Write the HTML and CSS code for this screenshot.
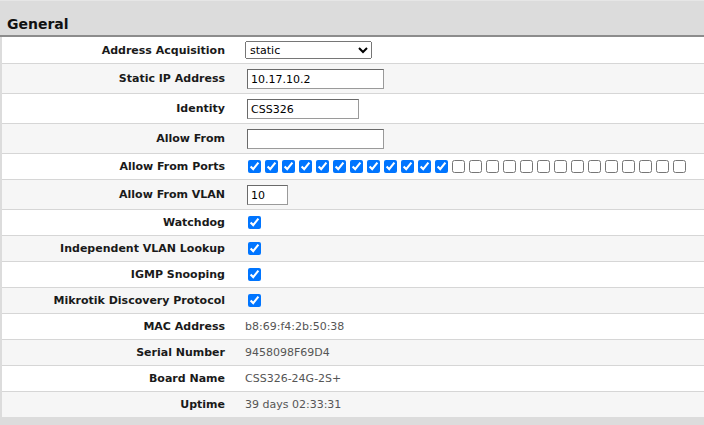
FILE: index.html
```html
<!DOCTYPE html>
<html lang="en">
<head>
  <meta charset="UTF-8">
  <title>SwOS - System</title>
  <link rel="stylesheet" href="styles.css">
</head>
<body>
  <div class="page">
    <h3 class="group-title">General</h3>
    <table class="settings">
      <tr class="first">
        <td class="label">Address Acquisition</td>
        <td class="value">
          <select class="sel-addr">
            <option>static</option>
            <option>DHCP with fallback</option>
            <option>DHCP only</option>
          </select>
        </td>
      </tr>
      <tr class="field">
        <td class="label">Static IP Address</td>
        <td class="value"><input type="text" class="in-wide" value="10.17.10.2"></td>
      </tr>
      <tr class="field">
        <td class="label">Identity</td>
        <td class="value"><input type="text" class="in-mid" value="CSS326"></td>
      </tr>
      <tr class="field">
        <td class="label">Allow From</td>
        <td class="value"><input type="text" class="in-wide" value=""></td>
      </tr>
      <tr>
        <td class="label">Allow From Ports</td>
        <td class="value"><div class="ports" id="ports"></div></td>
      </tr>
      <tr class="field">
        <td class="label">Allow From VLAN</td>
        <td class="value"><input type="text" class="in-short" value="10"></td>
      </tr>
      <tr>
        <td class="label">Watchdog</td>
        <td class="value"><input type="checkbox" class="chk" checked></td>
      </tr>
      <tr>
        <td class="label">Independent VLAN Lookup</td>
        <td class="value"><input type="checkbox" class="chk" checked></td>
      </tr>
      <tr>
        <td class="label">IGMP Snooping</td>
        <td class="value"><input type="checkbox" class="chk" checked></td>
      </tr>
      <tr>
        <td class="label">Mikrotik Discovery Protocol</td>
        <td class="value"><input type="checkbox" class="chk" checked></td>
      </tr>
      <tr>
        <td class="label">MAC Address</td>
        <td class="value ro">b8:69:f4:2b:50:38</td>
      </tr>
      <tr>
        <td class="label">Serial Number</td>
        <td class="value ro">9458098F69D4</td>
      </tr>
      <tr>
        <td class="label">Board Name</td>
        <td class="value ro">CSS326-24G-2S+</td>
      </tr>
      <tr>
        <td class="label">Uptime</td>
        <td class="value ro">39 days 02:33:31</td>
      </tr>
    </table>
  </div>

  <script>
    // 26 ports, first 12 allowed
    const ports = document.getElementById("ports");
    for (let i = 0; i < 26; i++) {
      const cb = document.createElement("input");
      cb.type = "checkbox";
      cb.className = "chk";
      cb.title = "Port" + (i + 1);
      if (i < 12) cb.checked = true;
      ports.appendChild(cb);
    }
  </script>
</body>
</html>
```

FILE: styles.css
```css
body {
  margin: 0;
  background: #dcdcdc;
  font-family: "DejaVu Sans", Verdana, sans-serif;
  font-size: 11px;
  color: #111;
}

.page {
  padding-left: 2px;
}

.group-title {
  margin: 0 0 0 -2px;
  height: 37px;
  box-sizing: border-box;
  padding: 14px 7px 0;
  font-size: 14px;
  line-height: 18px;
  border-top: 1px solid #e6e6e6;
  border-bottom: 2px solid #8c8c8c;
}

.settings {
  width: 100%;
  border-collapse: collapse;
}

.settings tr {
  background: #fff;
  border-bottom: 1px solid #d6d6d6;
}

.settings tr:nth-child(even) {
  background: #f6f6f6;
}

.settings tr:last-child {
  border-bottom: none;
}

.settings td {
  height: 25px;
  padding: 0;
  vertical-align: middle;
}

.settings tr.first td {
  height: 26px;
}

.label {
  width: 223px;
  padding-right: 20px !important;
  text-align: right;
  font-weight: bold;
  color: #1a1a1a;
  white-space: nowrap;
}

.value.ro {
  color: #555;
}

.sel-addr {
  width: 127px;
  height: 18px;
  margin: 0;
  font-family: inherit;
  font-size: 11px;
}

input[type="text"] {
  box-sizing: border-box;
  height: 20px;
  margin: 5px 0 4px 2px;
  padding: 1px 3px;
  font-family: inherit;
  font-size: 11px;
  color: #000;
  background: #fff;
  border: 1px solid #9a9a9a;
  border-top-color: #6a6a6a;
  border-left-color: #6a6a6a;
  display: block;
}

.in-wide {
  width: 137px;
}

.in-mid {
  width: 112px;
}

.in-short {
  width: 41px;
}

.chk {
  width: 13px;
  height: 13px;
  margin: 0 0 0 3px;
  vertical-align: middle;
}

.ports {
  display: flex;
  gap: 4px;
  padding-left: 3px;
}

.ports .chk {
  margin: 0;
}
```
